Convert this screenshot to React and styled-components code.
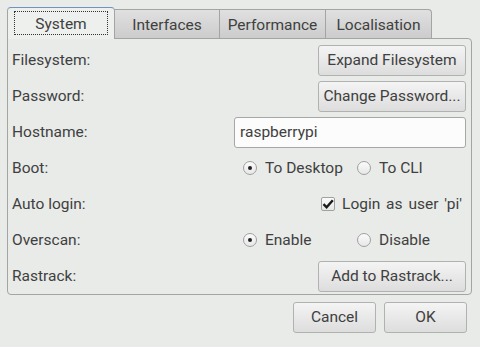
import React from "react";
import styled, { createGlobalStyle } from "styled-components";

const Global = createGlobalStyle`
  html, body { margin: 0; padding: 0; background: #e8ebe8; }
  body { font-family: Roboto, "Noto Sans", sans-serif; font-size: 15.5px; color: #404040; }
  * { box-sizing: border-box; }
`;

const Window = styled.div`
  width: 480px;
  height: 347px;
  padding: 7px 8px 0 7px;
  display: flex;
  flex-direction: column;
`;

const TabBar = styled.div`
  display: flex;
  align-items: flex-end;
  height: 31px;
  position: relative;
  z-index: 1;
`;

const Tab = styled.div`
  position: relative;
  width: ${(p) => p.$w}px;
  height: ${(p) => (p.$active ? 32 : 29)}px;
  margin-bottom: ${(p) => (p.$active ? -1 : 0)}px;
  margin-left: ${(p) => (p.$first ? 0 : -1)}px;
  display: flex;
  align-items: stretch;
  padding: ${(p) => (p.$active ? "3px 6px 4px 6px" : "1px 6px 0")};
  border: 1px solid #a3a5a3;
  border-bottom: none;
  border-top-color: ${(p) => (p.$active ? "#6f93c4" : "#a3a5a3")};
  border-radius: ${(p) => (p.$active ? "4px 4px 0 0" : p.$last ? "0 4px 0 0" : "0")};
  background: ${(p) =>
    p.$active ? "#eef0ee" : "linear-gradient(#dfe0df, #cbcccb)"};
  z-index: ${(p) => (p.$active ? 2 : 1)};
`;

const TabLabel = styled.span`
  flex: 1;
  display: flex;
  align-items: center;
  justify-content: center;
  border: 1px dotted ${(p) => (p.$focus ? "#333" : "transparent")};
  padding-top: 1px;
`;

const Panel = styled.div`
  width: 465px;
  height: 257px;
  border: 1px solid #a3a5a3;
  border-radius: 0 4px 4px 4px;
  padding: 3px 5px 0 4px;
  display: flex;
  flex-direction: column;
`;

const Row = styled.div`
  display: grid;
  grid-template-columns: 1fr 232px;
  align-items: center;
  height: 36px;
`;

const Label = styled.span`
  line-height: 18px;
`;

const Button = styled.button`
  font: inherit;
  color: #404040;
  width: ${(p) => p.$w || 148}px;
  height: 31px;
  justify-self: end;
  border: 1px solid #b0b2b0;
  border-radius: 3px;
  background: linear-gradient(#f3f4f3, #dcdddc);
  padding: 0 2px 1px;
  display: flex;
  align-items: center;
  justify-content: center;
  white-space: nowrap;
`;

const Input = styled.div`
  height: 31px;
  border: 1px solid #a6a8a6;
  border-radius: 3px;
  background: #fbfcfb;
  display: flex;
  align-items: center;
  padding: 0 5px 1px;
`;

const RadioGroup = styled.div`
  display: grid;
  grid-template-columns: 114px 1fr;
  padding-left: 9px;
  align-items: center;
`;

const Option = styled.span`
  display: inline-flex;
  align-items: center;
  gap: 8px;
`;

const RadioCircle = styled.span`
  width: 14px;
  height: 14px;
  border-radius: 50%;
  border: 1px solid #9fa19f;
  background: linear-gradient(#fbfbfb, #e6e7e6);
  display: inline-flex;
  align-items: center;
  justify-content: center;
  &::after {
    content: "";
    width: 4px;
    height: 4px;
    border-radius: 50%;
    background: ${(p) => (p.$on ? "#222" : "transparent")};
  }
`;

const CheckRow = styled.span`
  justify-self: end;
  display: inline-flex;
  align-items: center;
  gap: 7px;
  padding-right: 4px;
`;

const CheckLabel = styled.span`
  word-spacing: 2px;
`;

const CheckBox = styled.span`
  width: 14px;
  height: 14px;
  border: 1px solid #9fa19f;
  border-radius: 2px;
  background: linear-gradient(#fbfbfb, #e6e7e6);
  display: inline-flex;
  align-items: center;
  justify-content: center;
`;

const Footer = styled.div`
  display: flex;
  justify-content: flex-end;
  gap: 8px;
  padding: 7px 5px 0 0;
`;

const Radio = ({ on, children }) => (
  <Option>
    <RadioCircle $on={on} />
    <span>{children}</span>
  </Option>
);

export default function App() {
  return (
    <>
      <Global />
      <Window>
        <TabBar>
          <Tab $active $first $w={108}>
            <TabLabel $focus>System</TabLabel>
          </Tab>
          <Tab $w={106}>
            <TabLabel>Interfaces</TabLabel>
          </Tab>
          <Tab $w={107}>
            <TabLabel>Performance</TabLabel>
          </Tab>
          <Tab $last $w={107}>
            <TabLabel>Localisation</TabLabel>
          </Tab>
        </TabBar>
        <Panel>
          <Row>
            <Label>Filesystem:</Label>
            <Button>Expand Filesystem</Button>
          </Row>
          <Row>
            <Label>Password:</Label>
            <Button>Change Password...</Button>
          </Row>
          <Row>
            <Label>Hostname:</Label>
            <Input>raspberrypi</Input>
          </Row>
          <Row>
            <Label>Boot:</Label>
            <RadioGroup>
              <Radio on>To Desktop</Radio>
              <Radio>To CLI</Radio>
            </RadioGroup>
          </Row>
          <Row>
            <Label>Auto login:</Label>
            <CheckRow>
              <CheckBox>
                <svg width="12" height="12" viewBox="0 0 12 12">
                  <path d="M1.5 6.2 L4.6 9.3 L10.8 2.2" fill="none" stroke="#1a1a1a" strokeWidth="2.4" />
                </svg>
              </CheckBox>
              <CheckLabel>Login as user 'pi'</CheckLabel>
            </CheckRow>
          </Row>
          <Row>
            <Label>Overscan:</Label>
            <RadioGroup>
              <Radio on>Enable</Radio>
              <Radio>Disable</Radio>
            </RadioGroup>
          </Row>
          <Row>
            <Label>Rastrack:</Label>
            <Button>Add to Rastrack...</Button>
          </Row>
        </Panel>
        <Footer>
          <Button $w={83}>Cancel</Button>
          <Button $w={83}>OK</Button>
        </Footer>
      </Window>
    </>
  );
}
